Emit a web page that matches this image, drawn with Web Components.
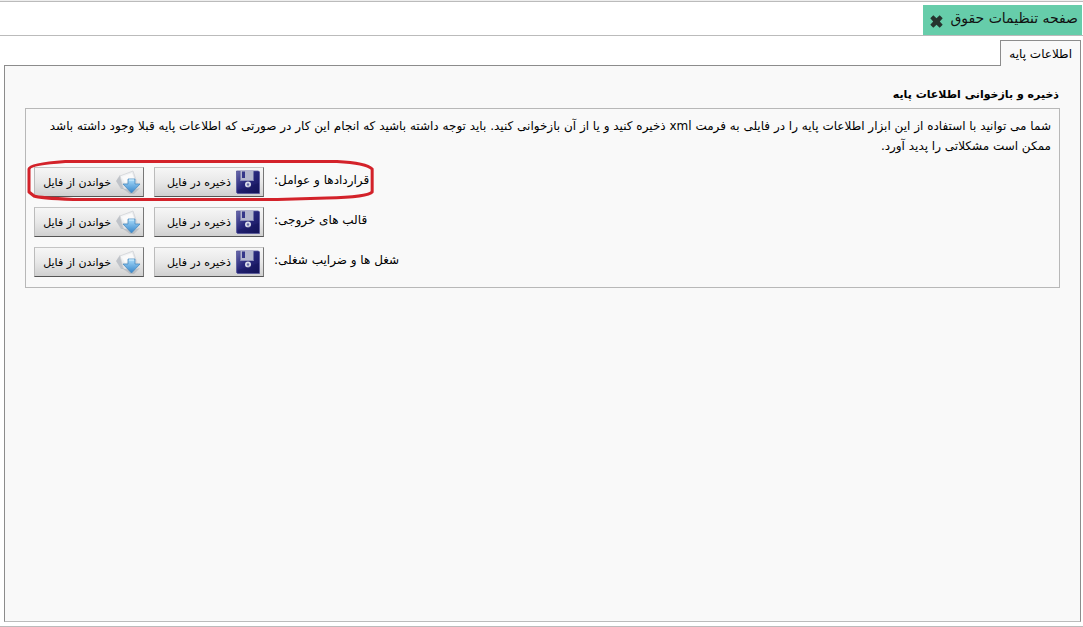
<!DOCTYPE html>
<html lang="fa" dir="rtl">
<head>
<meta charset="utf-8">
<title>صفحه تنظیمات حقوق</title>
<style>
html, body { margin: 0; height: 100%; background: #fff; }
body { font: 12px/20px "DejaVu Sans", sans-serif; color: #000; }
</style>
</head>
<body>
<settings-page></settings-page>
<script>
const define = (name, html, init) => {
  const template = document.createElement('template');
  template.innerHTML = html;
  customElements.define(name, class extends HTMLElement {
    constructor() {
      super();
      this.attachShadow({ mode: 'open' }).append(template.content.cloneNode(true));
      if (init) init(this, this.shadowRoot);
    }
  });
};

define('page-tab', `
<style>
:host { display: flex; align-items: center; gap: 7px; height: 30px; padding: 0 4px 0 7px; background: #66cdaa; font-size: 14px; color: #111; }
button { display: block; width: 13px; height: 13px; margin: 2px 0 0; padding: 0; border: 0; background: none; }
span { margin-bottom: 4px; white-space: nowrap; }
svg { display: block; }
</style>
<span><slot></slot></span>
<button type="button" aria-label="بستن"><svg width="13" height="13" viewBox="0 0 13 13"><path d="M3.300 .3 6.500 3.200 9.700 .3 12.700 3.300 9.800 6.500l2.900 3.200-3 3-3.200-2.900-3.200 2.900-3-3 2.900-3.200L.3 3.300z" fill="#26332e"/></svg></button>`);

define('floppy-icon', `
<style>:host { display: block; width: 24px; height: 24px; } svg { display: block; }</style>
<svg width="24" height="24" viewBox="0 0 24 24">
<defs><linearGradient id="f" x1="0" y1="0" x2="1" y2="1"><stop offset="0" stop-color="#6b6bac"/><stop offset=".45" stop-color="#28287c"/><stop offset="1" stop-color="#15155c"/></linearGradient></defs>
<path d="M.5 1h22l1 1v21.500H1.500l-1-1z" fill="url(#f)" stroke="#55559a" stroke-width=".8"/>
<path d="M4.500 1h13v10h-13z" fill="#b5b8ce"/><path d="M4.500 10h13v1h-13z" fill="#8c8fba"/>
<path d="M6 1.500h3V8H6z" fill="#35378a"/>
<circle cx="12" cy="14.500" r="3" fill="#d9ddea"/><circle cx="12" cy="14.500" r="1.200" fill="#6569a8"/>
<path d="M2 20 23 13v10H2z" fill="#0c0c4c" opacity=".25"/></svg>`);

define('import-icon', `
<style>:host { display: block; width: 24px; height: 24px; } svg { display: block; overflow: visible; }</style>
<svg width="24" height="24" viewBox="0 0 24 24">
<defs><linearGradient id="p" x1="0" y1="0" x2="1" y2="1"><stop offset="0" stop-color="#fff"/><stop offset="1" stop-color="#cdd1d6"/></linearGradient>
<linearGradient id="a" x1="0" y1="0" x2="0" y2="1"><stop offset="0" stop-color="#a8dcfb"/><stop offset="1" stop-color="#3584c9"/></linearGradient></defs>
<path d="M0 11 4 5 8 19 5 19z" fill="#bfc3c9"/>
<path d="M4 6 17 1l4.500 13L8 20z" fill="url(#p)" stroke="#d0d3d7" stroke-width=".8"/>
<path d="m6 7 10-4 3 7-10 3z" fill="#fafafa"/>
<path d="M6 18q8 3 18 0l-6 6h-4z" fill="#999fa8" opacity=".45"/>
<path d="M12 9h7v5h5l-8.500 9L7 14h5z" fill="url(#a)" stroke="#4a8cc0" stroke-width=".8"/>
<path d="M13 10h5" stroke="#d5f1ff"/></svg>`);

define('file-button', `
<style>
:host { display: block; }
button { display: flex; align-items: center; justify-content: flex-start; gap: 5px; box-sizing: border-box; width: 110px; height: 30px; margin: 0; padding: 0 3px; border: 1px solid; border-color: #c4c4c4 #777 #555 #bbb; background: linear-gradient(#f6f6f6, #e8e8e8 50%, #d0d0d0); font: inherit; font-size: 11px; color: #000; white-space: nowrap; }
.label { margin-top: 2px; }
</style>
<button type="button"><slot name="icon"></slot><span class="label"><slot></slot></span></button>`);

define('file-row', `
<style>
:host { display: flex; justify-content: flex-end; height: 40px; }
.row { position: relative; display: flex; align-items: flex-start; gap: 10px; }
.name { margin-top: 3px; white-space: nowrap; }
svg { display: none; position: absolute; left: -7px; top: -7px; width: calc(100% + 12px); height: 42px; overflow: visible; pointer-events: none; }
:host([marked]) svg { display: block; }
</style>
<div class="row">
<span class="name"><slot></slot></span>
<file-button><floppy-icon slot="icon"></floppy-icon>ذخیره در فایل</file-button>
<file-button><import-icon slot="icon"></import-icon>خواندن از فایل</file-button>
<svg viewBox="0 0 345 42" preserveAspectRatio="none"><path d="M38 1.500H308Q337 3 343 9V32Q339 37 298 38L249 39.500H46Q12 38 7 36L2 32V9Q3 4 38 1.500Z" fill="none" stroke="#d3222a" stroke-width="3" stroke-linejoin="round"/></svg>
</div>`);

define('settings-group', `
<style>
:host { display: block; }
h2 { margin: 0 1px 3px; font-size: 11px; line-height: 20px; font-weight: bold; }
.box { border: 1px solid #b8b8b8; padding: 7px 8px 0; }
</style>
<h2><slot name="title"></slot></h2>
<div class="box"><slot></slot></div>`);

define('tab-panel', `
<style>
:host { display: flex; flex-direction: column; }
.tab { position: relative; z-index: 1; align-self: flex-start; box-sizing: border-box; height: 26px; margin-bottom: -1px; padding: 3px 8px; border: 1px solid #8c8c8c; border-bottom: 0; background: #f9f9f9; font: inherit; color: #000; white-space: nowrap; }
.panel { flex: 1; padding: 19px 20px; border: 1px solid #8c8c8c; border-bottom-color: #bbb; background: #f9f9f9; }
</style>
<button class="tab" type="button"><slot name="tab"></slot></button>
<div class="panel"><slot></slot></div>`);

define('settings-page', `
<style>
:host { display: flex; flex-direction: column; box-sizing: border-box; min-height: 100vh; border-top: 1px solid #eee; border-bottom: 1px solid #bbb; }
header { display: flex; padding: 3px 1px 0; border-top: 1px solid #bbb; border-bottom: 1px solid #bbb; }
tab-panel { flex: 1; margin: 4px 2px 4px 4px; }
p { margin: 0 0 11px; }
</style>
<header><page-tab>صفحه تنظیمات حقوق</page-tab></header>
<tab-panel>
<span slot="tab">اطلاعات پایه</span>
<settings-group>
<span slot="title">ذخیره و بازخوانی اطلاعات پایه</span>
<p>شما می توانید با استفاده از این ابزار اطلاعات پایه را در فایلی به فرمت xml ذخیره کنید و یا از آن بازخوانی کنید. باید توجه داشته باشید که انجام این کار در صورتی که اطلاعات پایه قبلا وجود داشته باشد ممکن است مشکلاتی را پدید آورد.</p>
<file-row marked>قراردادها و عوامل:</file-row>
<file-row>قالب های خروجی:</file-row>
<file-row>شغل ها و ضرایب شغلی:</file-row>
</settings-group>
</tab-panel>`);
</script>
</body>
</html>
